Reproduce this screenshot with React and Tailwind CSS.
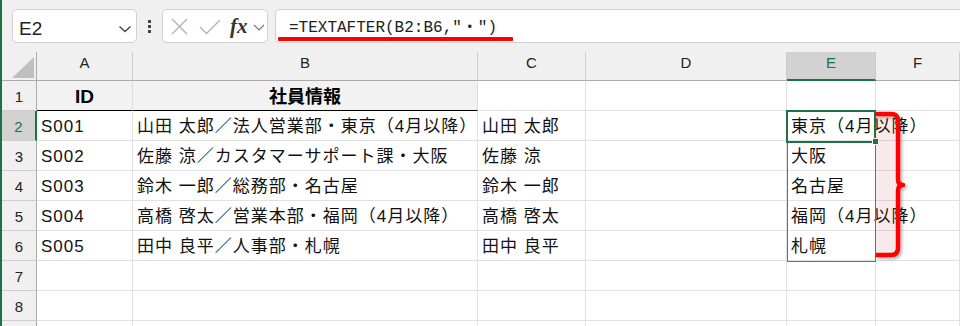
import React from "react";

const COLS = ["A", "B", "C", "D", "E", "F"];

const rows = [
  { n: 1, a: "ID", b: "社員情報", head: true },
  { n: 2, a: "S001", b: "山田 太郎／法人営業部・東京（4月以降）", c: "山田 太郎", e: "東京（4月以降）" },
  { n: 3, a: "S002", b: "佐藤 涼／カスタマーサポート課・大阪", c: "佐藤 涼", e: "大阪" },
  { n: 4, a: "S003", b: "鈴木 一郎／総務部・名古屋", c: "鈴木 一郎", e: "名古屋" },
  { n: 5, a: "S004", b: "高橋 啓太／営業本部・福岡（4月以降）", c: "高橋 啓太", e: "福岡（4月以降）" },
  { n: 6, a: "S005", b: "田中 良平／人事部・札幌", c: "田中 良平", e: "札幌" },
  { n: 7 },
  { n: 8 },
  { n: 9, hidden: true },
];

function Cell({ children, className = "" }) {
  return (
    <div
      className={
        "relative border-r border-b border-[#e1e1e1] px-[4px] pt-[1px] leading-[30px] whitespace-nowrap overflow-visible text-[17px] tracking-[1px] text-[#111] " +
        className
      }
    >
      {children}
    </div>
  );
}

export default function App() {
  return (
    <div className="relative w-[960px] h-[326px] overflow-hidden flex bg-white font-['Liberation_Sans','Noto_Sans_CJK_JP',sans-serif]">
      <div className="w-[2px] shrink-0 bg-[#1e7145]" />
      <div className="flex-1 flex flex-col">
        {/* Toolbar */}
        <div className="h-[52px] shrink-0 bg-[#f0f0f0] flex items-start pt-[9px]">
          <div className="ml-[10px] w-[125px] h-[34px] bg-white border border-[#d0d0d0] rounded-[5px] flex items-start justify-between">
            <span className="pl-[6px] pt-[3px] leading-[32px] text-[19px] text-[#222] font-['Liberation_Sans',sans-serif]">E2</span>
            <svg width="14" height="10" viewBox="0 0 14 10" className="mt-[14px] mr-[4px]">
              <polyline points="1.5,2.5 7,7.5 12.5,2.5" fill="none" stroke="#444" strokeWidth="1.4" />
            </svg>
          </div>
          <div className="ml-[11px] mt-[11px] flex flex-col gap-[2px]">
            <div className="w-[3px] h-[3px] bg-[#444]" />
            <div className="w-[3px] h-[3px] bg-[#444]" />
            <div className="w-[3px] h-[3px] bg-[#444]" />
          </div>
          <div className="ml-[11px] w-[106px] h-[34px] bg-white border border-[#d0d0d0] rounded-[5px] flex items-start">
            <svg width="17" height="17" viewBox="0 0 17 17" className="ml-[8px] mt-[8px]">
              <line x1="1" y1="1" x2="16" y2="16" stroke="#b4b4b4" strokeWidth="1.4" />
              <line x1="16" y1="1" x2="1" y2="16" stroke="#b4b4b4" strokeWidth="1.4" />
            </svg>
            <svg width="22" height="16" viewBox="0 0 22 16" className="ml-[11px] mt-[9px]">
              <polyline points="1,8 7.5,14.5 21,1" fill="none" stroke="#b4b4b4" strokeWidth="1.4" />
            </svg>
            <span className="ml-[9px] leading-[32px] text-[21px] italic font-bold text-[#333] font-['Liberation_Serif',serif]">fx</span>
            <svg width="12" height="7" viewBox="0 0 12 7" className="ml-[5px] mt-[14px]">
              <polyline points="1,1 6,6 11,1" fill="none" stroke="#777" strokeWidth="1.2" />
            </svg>
          </div>
          <div className="relative ml-[7px] flex-1 h-[34px] bg-white border-y border-l border-[#d0d0d0] rounded-l-[5px]">
            <span className="block pl-[13px] pt-[2px] leading-[32px] text-[16px] text-[#222] whitespace-nowrap font-['Liberation_Mono','Noto_Sans_CJK_JP',monospace]">
              {'=TEXTAFTER(B2:B6,"・")'}
            </span>
            <div className="absolute left-[2px] top-[27px] w-[235px] h-[4px] bg-[#ff0000] rounded-[1px]" />
          </div>
        </div>

        {/* Grid */}
        <div className="grid grid-cols-[35px_96px_345px_108px_201px_89px_84px] grid-rows-[29px_repeat(9,30px)]">
          {/* corner */}
          <div className="bg-[#f0f0f0] border-r border-b border-[#ababab] flex items-end justify-end pr-[2px] pb-[2px]">
            <svg width="22" height="21" viewBox="0 0 22 21">
              <polygon points="22,0 22,21 0,21" fill="#bfbfbf" />
            </svg>
          </div>
          {COLS.map((c) =>
            c === "E" ? (
              <div key={c} className="bg-[#d2d2d2] border-r border-[#c8c8c8] border-b-2 border-b-[#1e7145] text-center leading-[22px] text-[15px] text-[#1e7145]">
                {c}
              </div>
            ) : (
              <div key={c} className="bg-[#f0f0f0] border-r border-[#cdcdcd] border-b border-b-[#ababab] text-center leading-[22px] text-[15px] text-[#222]">
                {c}
              </div>
            )
          )}

          {rows.map((r) => (
            <React.Fragment key={r.n}>
              {r.n === 2 ? (
                <div className="bg-[#d2d2d2] border-b border-[#cdcdcd] border-r-2 border-r-[#1e7145] text-center pt-[1px] leading-[30px] text-[15px] text-[#1e7145]">
                  {r.n}
                </div>
              ) : (
                <div className="bg-[#f0f0f0] border-b border-[#cdcdcd] border-r border-r-[#ababab] text-center pt-[1px] leading-[30px] text-[15px] text-[#222]">
                  {r.hidden ? "" : r.n}
                </div>
              )}
              {r.head ? (
                <>
                  <div className="bg-[#f2f2f2] border-r border-[#dadada] border-b border-b-black text-center pt-[1px] leading-[30px] text-[19px] font-bold text-black">
                    {r.a}
                  </div>
                  <div className="bg-[#f2f2f2] border-r border-[#dadada] border-b border-b-black text-center pt-[1px] leading-[30px] text-[18px] font-bold text-black">
                    {r.b}
                  </div>
                </>
              ) : (
                <>
                  <Cell>{r.a}</Cell>
                  <Cell>{r.b}</Cell>
                </>
              )}
              <Cell>{r.c}</Cell>
              <Cell />
              <Cell className="z-10">{r.e}</Cell>
              <Cell />
            </React.Fragment>
          ))}
        </div>
      </div>

      {/* spill range border */}
      <div className="absolute left-[787px] top-[111px] w-[89px] h-[151px] border border-[#4472c4] pointer-events-none z-20" />
      {/* active cell */}
      <div className="absolute left-[786px] top-[110px] w-[90px] h-[33px] border-2 border-[#1e7145] pointer-events-none z-20" />
      <div className="absolute left-[872px] top-[138px] w-[7px] h-[7px] bg-[#1e7145] border border-white z-30" />

      {/* red brace annotation */}
      <svg className="absolute left-0 top-0 z-30 pointer-events-none" width="960" height="326" viewBox="0 0 960 326">
        <defs>
          <filter id="sh" x="-50%" y="-10%" width="200%" height="120%">
            <feDropShadow dx="2" dy="2" stdDeviation="1.6" floodColor="#000" floodOpacity="0.28" />
          </filter>
        </defs>
        <path d="M876,114 H891 Q898,114 898,121 V248 Q898,255 891,255 H876 Z" fill="rgba(190,60,60,0.11)" />
        <path
          d="M876,114 H891 Q898,114 898,121 V179 Q898,185 903,185 Q898,185 898,191 V248 Q898,255 891,255 H876"
          fill="none"
          stroke="#ff0000"
          strokeWidth="4.5"
          strokeLinejoin="round"
          filter="url(#sh)"
        />
      </svg>
    </div>
  );
}
